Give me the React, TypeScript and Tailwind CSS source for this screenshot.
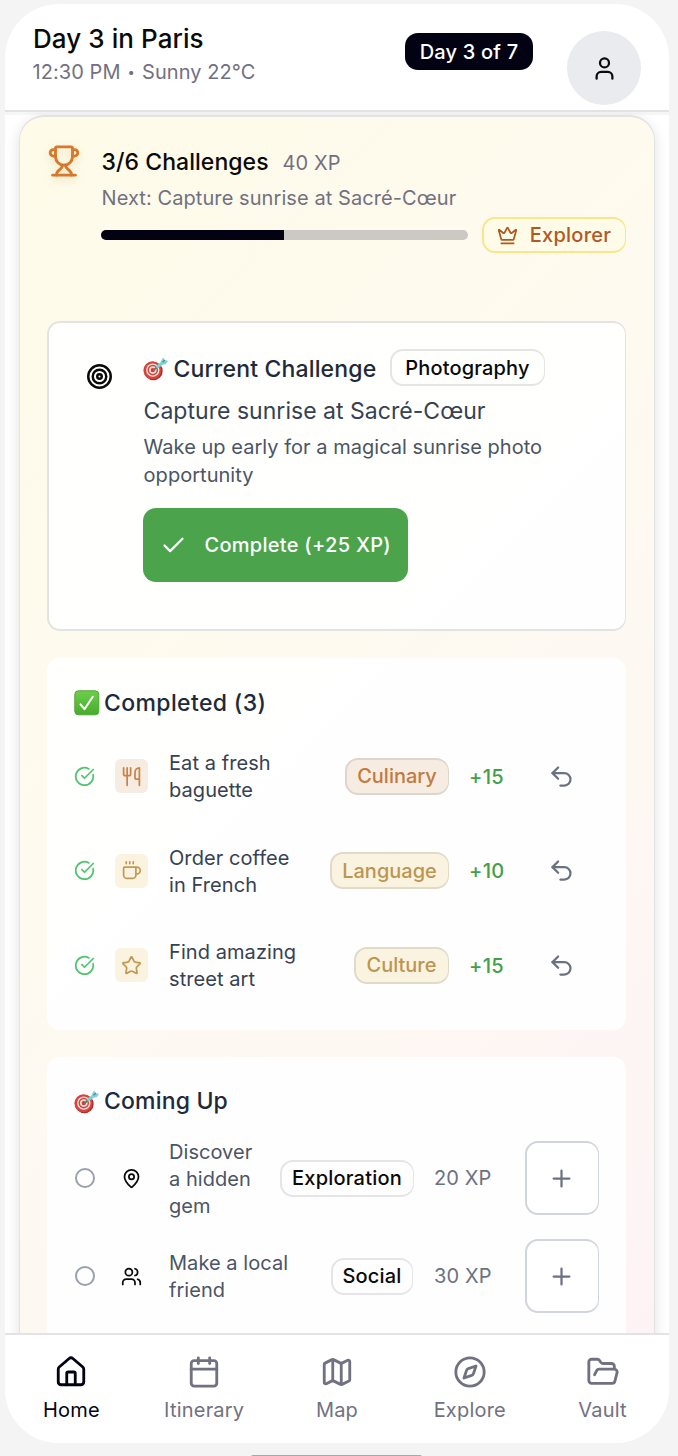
import React from "react";
import {
  Calendar,
  Check,
  CircleCheckBig,
  Coffee,
  Compass,
  Crown,
  FolderOpen,
  House,
  Map as MapIcon,
  MapPin,
  Plus,
  Star,
  Target,
  Undo2,
  User,
  Users,
  Utensils,
  type LucideIcon,
} from "lucide-react";

function TrophyIcon({ className }: { className?: string }) {
  return (
    <svg
      viewBox="0 0 24 24"
      width={34}
      height={34}
      fill="none"
      stroke="currentColor"
      strokeWidth={2}
      strokeLinecap="round"
      strokeLinejoin="round"
      className={className}
    >
      <path d="M6 8.500H4.500a2.250 2.250 0 0 1 0-4.500H6" />
      <path d="M18 8.500h1.500a2.250 2.250 0 0 0 0-4.500H18" />
      <path d="M4 22h16" />
      <path d="M10.500 14.800c.300.800.100 1.700-.600 2.300L7.500 19.500c-.600.600-.800 1.500-.800 2.500" />
      <path d="M13.500 14.800c-.300.800-.100 1.700.600 2.300l2.400 2.400c.600.600.800 1.500.800 2.500" />
      <path d="M18 3a1 1 0 0 0-1-1H7a1 1 0 0 0-1 1v6a6 6 0 0 0 12 0Z" />
    </svg>
  );
}

function DartEmoji() {
  return (
    <svg viewBox="0 0 26 26" className="size-[26px] shrink-0">
      <circle cx="10.4" cy="16" r="9.3" fill="#a92e2a" />
      <circle cx="9.4" cy="15.3" r="9" fill="#d8443c" />
      <circle cx="9.8" cy="15.1" r="6.7" fill="#f3e4e1" />
      <circle cx="9.8" cy="15.1" r="5.3" fill="#d4443d" />
      <circle cx="9.8" cy="15.1" r="3.8" fill="#f1dedb" />
      <circle cx="9.8" cy="15.1" r="2.2" fill="#cf4039" />
      <path d="M10 15.500 15 11.500" stroke="#6b7a4c" strokeWidth="1.8" />
      <path d="M13.500 12.500 20 7.500" stroke="#7fd0d6" strokeWidth="3" />
      <path d="m17.500 7 2.500-4.500 2 2.400 3.200 1.200-2.600 3.200-4 .500Z" fill="#86d0d6" />
      <path d="m19.500 7.300 2.300-2" stroke="#3f8e99" strokeWidth="1.200" />
    </svg>
  );
}

function CheckEmoji() {
  return (
    <svg viewBox="0 0 26 26" className="size-[26px] shrink-0">
      <defs>
        <linearGradient id="green" x1="0" y1="0" x2="0" y2="1">
          <stop offset="0" stopColor="#6fce4c" />
          <stop offset="1" stopColor="#48ab2c" />
        </linearGradient>
      </defs>
      <rect x="0.8" y="0.8" width="24" height="24" rx="3.6" fill="url(#green)" stroke="#4ea536" />
      <path d="m6.5 14.3 4 4.8L18.8 6.8" fill="none" stroke="#fff" strokeWidth="2" strokeLinecap="round" strokeLinejoin="round" />
    </svg>
  );
}

type Done = { icon: LucideIcon; lines: string[]; tag: string; tagClass: string; tileClass: string; xp: string };

const completed: Done[] = [
  {
    icon: Utensils,
    lines: ["Eat a fresh", "baguette"],
    tag: "Culinary",
    tagClass: "w-[104px] bg-[#f7ece1] border-[#dfd5ca] text-[#c37a3c]",
    tileClass: "bg-[#f7ece1] text-[#c8844c]",
    xp: "+15",
  },
  {
    icon: Coffee,
    lines: ["Order coffee", "in French"],
    tag: "Language",
    tagClass: "w-[119px] bg-[#faf3e0] border-[#e1dac9] text-[#bd9550]",
    tileClass: "bg-[#faf3e0] text-[#c29a57]",
    xp: "+10",
  },
  {
    icon: Star,
    lines: ["Find amazing", "street art"],
    tag: "Culture",
    tagClass: "w-[95px] bg-[#faf3e0] border-[#e1dac9] text-[#bd9550]",
    tileClass: "bg-[#faf3e0] text-[#c29a57]",
    xp: "+15",
  },
];

const upcoming = [
  { icon: MapPin, lines: ["Discover", "a hidden", "gem"], tag: "Exploration", tagClass: "w-[134px]", xp: "20 XP" },
  { icon: Users, lines: ["Make a local", "friend"], tag: "Social", tagClass: "w-[82px] mr-px", xp: "30 XP" },
];

const tabs = [
  { icon: House, label: "Home", active: true },
  { icon: Calendar, label: "Itinerary" },
  { icon: MapIcon, label: "Map" },
  { icon: Compass, label: "Explore" },
  { icon: FolderOpen, label: "Vault" },
];

const badge =
  "flex h-[37px] shrink-0 items-center justify-center rounded-[13px] border-2 border-r pr-[1px] text-[20px] font-medium leading-none";

export default function App() {
  return (
    <div className="flex h-[1456px] w-[678px] flex-col overflow-hidden bg-[#f4f4f4] pt-1 pl-[5px] font-['Inter',sans-serif] whitespace-nowrap">
      <div className="flex h-[1439px] w-[664px] shrink-0 flex-col overflow-hidden rounded-[54px] bg-white">
        <header className="flex h-[108px] shrink-0 items-start border-b-2 border-[#e3e3e5] pl-[28px]">
          <div className="flex-1 pt-[18px]">
            <h1 className="text-[26px] leading-[34px] font-medium tracking-[0.07px] text-[#0a0a0a]">Day 3 in Paris</h1>
            <p className="-ml-[0.5px] flex items-center text-[20px] leading-[32px] tracking-[0.07px] text-[#717182]">
              12:30 PM <span className="mx-[7px] text-[13px]">•</span> Sunny 22°C
            </p>
          </div>
          <div className="mt-[29px] flex h-[37px] w-[128px] items-center justify-center rounded-[13px] bg-[#030213] text-[20px] font-medium tracking-[0.2px] text-white">
            Day 3 of 7
          </div>
          <div className="mt-[27px] mr-[28px] ml-[34px] flex size-[74px] items-center justify-center rounded-full bg-[#e9ebef] text-[#0a0a0a]">
            <User size={27} />
          </div>
        </header>

        <main className="h-[1221px] shrink-0 overflow-hidden bg-white">
          <div className="h-[3px] bg-[#f6f6f6]" />
          <section className="ml-[14px] h-[1400px] w-[636px] rounded-[25px] border-x border-t-2 border-[#e3e3e3] bg-linear-[135deg,#fefbe8_0%,#fefaf0_42%,#fdf2f7_100%] px-[27px] shadow-[0_4px_14px_rgba(0,0,0,0.12)]">
            <div className="flex h-[204px]">
              <div className="w-[54px] shrink-0 pt-[27px]">
                <TrophyIcon className="text-[#d7792b] drop-shadow-[0_3px_4px_rgba(180,140,60,0.25)]" />
              </div>
              <div className="flex-1 pt-[28px]">
                <div className="flex h-[34px] items-center gap-[14px] pl-[0.5px]">
                  <h2 className="text-[23px] font-medium tracking-[0.05px] text-[#0a0a0a]">3/6 Challenges</h2>
                  <span className="pt-[2px] text-[20px] tracking-[0.1px] text-[#717182]">40 XP</span>
                </div>
                <p className="pl-[0.5px] text-[20px] leading-[38px] tracking-[0.08px] text-[#717182]">Next: Capture sunrise at Sacré-Cœur</p>
                <div className="flex h-[36px] items-center gap-[14px]">
                  <div className="h-[10px] w-[367px] overflow-hidden rounded-full bg-[#ccc9c4]">
                    <div className="h-full w-[183px] bg-[#030213]" />
                  </div>
                  <div className="flex h-[36px] w-[144px] shrink-0 items-center justify-center gap-[12px] rounded-[13px] border-2 border-r border-[#f9e58b] bg-[#fefbe8] pr-[1px] text-[20px] font-medium tracking-[0.25px] text-[#b1581f]">
                    <Crown size={21} />
                    Explorer
                  </div>
                </div>
              </div>
            </div>

            <div className="flex h-[310px] w-[579px] rounded-[13px] border-2 border-r border-[#e3e3e3] bg-white/90">
              <div className="w-[94px] shrink-0 pt-[40px] pl-[37px]">
                <Target size={27} className="text-[#0a0a0a]" strokeWidth={2.2} />
              </div>
              <div className="flex flex-col items-start pt-[26px]">
                <div className="flex h-[37px] items-center">
                  <DartEmoji />
                  <h3 className="ml-[4.5px] w-[216.5px] pt-[3px] text-[23px] font-medium tracking-[0.16px] text-[#1e2939]">Current Challenge</h3>
                  <span className={`${badge} w-[155px] border-[#e5e5e5] tracking-[0.15px] text-[#0a0a0a]`}>Photography</span>
                </div>
                <p className="mt-[10px] pl-[0.6px] text-[23px] leading-[31px] tracking-[0.03px] text-[#364153]">Capture sunrise at Sacré-Cœur</p>
                <p className="mt-[6px] pl-[0.6px] text-[20px] leading-[28px] tracking-[0.03px] text-[#4a5565]">
                  Wake up early for a magical sunrise photo
                  <br />
                  opportunity
                </p>
                <button className="mt-[19px] flex h-[74px] w-[265px] items-center rounded-[13px] bg-[#4ba34c] pl-[17px] text-[20px] font-medium tracking-[0.28px] text-white">
                  <Check size={27} className="mr-[17.5px]" />
                  Complete (+25 XP)
                </button>
              </div>
            </div>

            <div className="mt-[27px] h-[372px] w-[579px] rounded-[13px] bg-white/90 px-[27px]">
              <div className="flex h-[71px] items-end pb-[1px]">
                <div className="flex h-[50px] items-center gap-[4px]">
                  <CheckEmoji />
                  <h3 className="text-[23px] font-medium tracking-[0.37px] text-[#1e2939]">Completed (3)</h3>
                </div>
              </div>
              {completed.map((c) => (
                <div key={c.tag} className="flex h-[94.5px] items-center">
                  <CircleCheckBig size={21} className="mr-[20px] shrink-0 text-[#4ec66d]" />
                  <div className={`flex h-[34px] w-[33px] shrink-0 items-center justify-center rounded-[6px] ${c.tileClass}`}>
                    <c.icon size={21} />
                  </div>
                  <p className="ml-[21px] flex-1 pt-[2px] text-[20px] leading-[27px] tracking-[0.07px] text-[#364153]">
                    {c.lines[0]}
                    <br />
                    {c.lines[1]}
                  </p>
                  <span className={`${badge} ${c.tagClass}`}>{c.tag}</span>
                  <span className="ml-[20px] w-[56px] pt-px text-[20px] font-medium tracking-[0.35px] text-[#41a04b]">{c.xp}</span>
                  <span className="flex w-[74px] items-center justify-center pr-px text-[#6a7282]">
                    <Undo2 size={27} />
                  </span>
                </div>
              ))}
            </div>

            <div className="mt-[27px] h-[400px] w-[579px] rounded-[13px] bg-white/90 px-[27px]">
              <div className="flex h-[72px] items-center gap-[4px] pt-[16px]">
                <DartEmoji />
                <h3 className="text-[23px] font-medium tracking-[0.17px] text-[#1e2939]">Coming Up</h3>
              </div>
              {upcoming.map((u) => (
                <div key={u.tag} className="flex h-[98px] items-center">
                  <span className="mr-[20.5px] ml-[0.5px] size-[20px] shrink-0 rounded-full border-2 border-[#99a1af]" />
                  <div className="flex w-[33px] shrink-0 items-center justify-center text-[#0a0a0a]">
                    <u.icon size={21} />
                  </div>
                  <p className="ml-[21px] flex-1 pt-[2px] text-[20px] leading-[27px] tracking-[0.05px] text-[#4a5565]">
                    {u.lines.map((l) => (
                      <React.Fragment key={l}>
                        {l}
                        <br />
                      </React.Fragment>
                    ))}
                  </p>
                  <span className={`${badge} ${u.tagClass} border-[#e5e5e5] tracking-[0.2px] text-[#0a0a0a]`}>{u.tag}</span>
                  <span className="ml-[20px] w-[91px] text-[20px] tracking-[0.1px] text-[#6a7282]">{u.xp}</span>
                  <button className="flex size-[74px] items-center justify-center rounded-[13px] border-2 border-r border-[#d1d5dc] bg-white pr-[2px] text-[#6a7282]">
                    <Plus size={27} />
                  </button>
                </div>
              ))}
            </div>
          </section>
        </main>

        <nav className="flex flex-1 border-t-2 border-[#e3e3e5] bg-white">
          {tabs.map((t) => (
            <div
              key={t.label}
              className={`flex flex-1 flex-col items-center pt-[20px] text-[20px] tracking-[0.2px] ${t.active ? "text-[#030213]" : "text-[#717182]"}`}
            >
              <t.icon size={34} />
              <span className="mt-[6px] leading-[30px]">{t.label}</span>
            </div>
          ))}
        </nav>
      </div>
      <div className="mt-[12px] ml-[246px] h-[10px] w-[171px] shrink-0 rounded-[2px] bg-[#a8a8a8]" />
    </div>
  );
}
